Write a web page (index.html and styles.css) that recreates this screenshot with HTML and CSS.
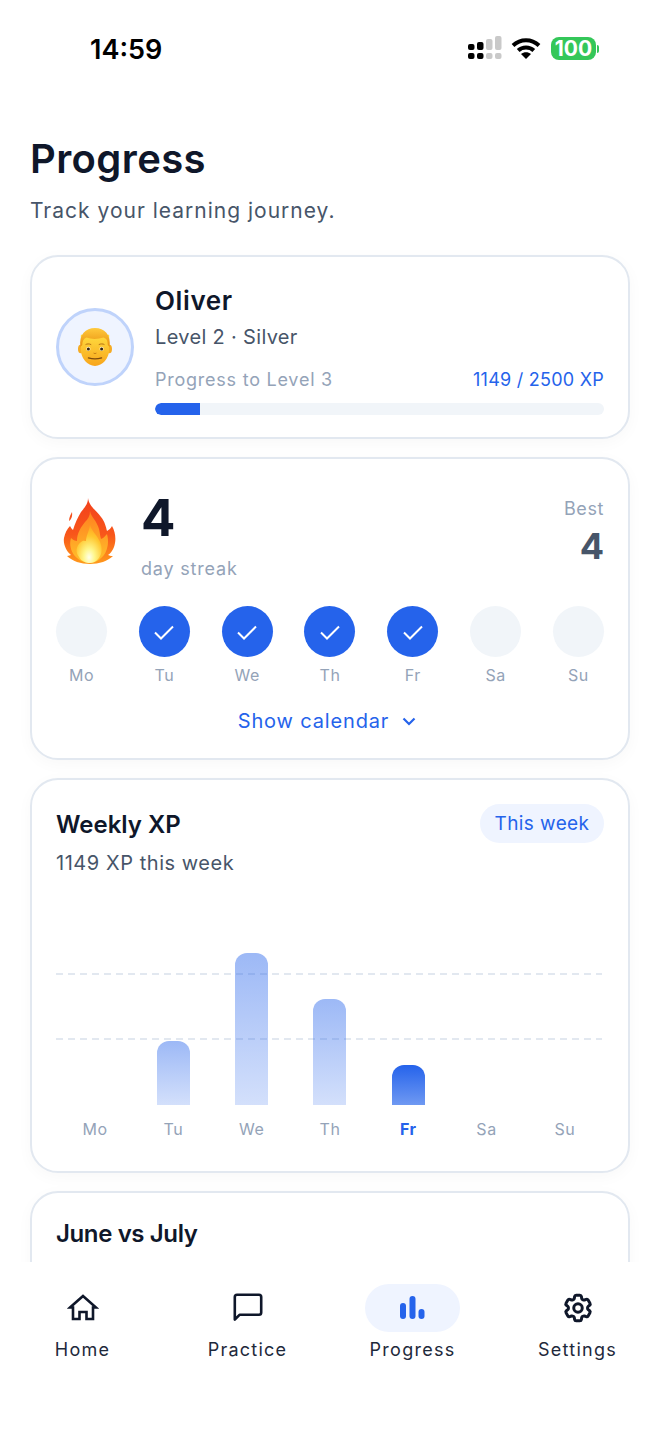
FILE: index.html
```html
<!DOCTYPE html>
<html lang="en">
<head>
<meta charset="utf-8">
<title>Progress</title>
<link rel="stylesheet" href="styles.css">
</head>
<body>
<div class="app">
  <div class="content">
    <div class="status">
      <span class="time">14:59</span>
      <div class="status-icons">
        <svg class="signal" width="35" height="24" viewBox="0 0 35 24">
          <rect x="0" y="8" width="6.500" height="6" rx="2" fill="#000"/><rect x="0" y="17" width="6.500" height="6" rx="2" fill="#000"/>
          <rect x="9" y="6" width="6.500" height="8" rx="2" fill="#000"/><rect x="9" y="17" width="6.500" height="6" rx="2" fill="#000"/>
          <rect x="18" y="3" width="6.500" height="11" rx="2" fill="#c9c9c9"/><rect x="18" y="17" width="6.500" height="6" rx="2" fill="#c9c9c9"/>
          <rect x="27" y="0" width="6.500" height="14" rx="2" fill="#c9c9c9"/><rect x="27" y="17" width="6.500" height="6" rx="2" fill="#c9c9c9"/>
        </svg>
        <svg class="wifi" width="30" height="22" viewBox="0 0 30 22">
          <path d="M2 8.500C9.500 1.500 20.500 1.500 28 8.500" fill="none" stroke="#000" stroke-width="4"/>
          <path d="M7.200 13.500C11.500 9.500 18.500 9.500 22.800 13.500" fill="none" stroke="#000" stroke-width="4"/>
          <path d="M10 17 L15 22 L20 17 C17 14.500 13 14.500 10 17Z" fill="#000"/>
        </svg>
        <div class="battery"><span class="battery-body">100</span><span class="battery-cap"></span></div>
      </div>
    </div>

    <main class="main">
      <h1 class="title">Progress</h1>
      <p class="subtitle">Track your learning journey.</p>

      <section class="card profile">
        <div class="avatar">
          <svg width="34" height="40" viewBox="0 0 36 42">
            <defs>
              <linearGradient id="skin" x1="0" y1="0" x2="0" y2="1"><stop offset="0" stop-color="#ffdc3f"/><stop offset="1" stop-color="#f8a51c"/></linearGradient>
              <linearGradient id="hair" x1="0" y1="0" x2="0" y2="1"><stop offset="0" stop-color="#ffc93c"/><stop offset="1" stop-color="#e8900f"/></linearGradient>
            </defs>
            <ellipse cx="2.800" cy="23" rx="2.800" ry="4.500" fill="#f5ab22"/>
            <ellipse cx="33.200" cy="23" rx="2.800" ry="4.500" fill="#f5ab22"/>
            <path d="M3 8V24C3 33 10 41 18 41C26 41 33 33 33 24V8Z" fill="url(#skin)"/>
            <path d="M2.500 21C1 8 8 1 18 1C28 1 35 8 33.500 21L31.500 19C31.500 14 30 12 27 11C21 13 14 13 9 11C6 12 4.500 15 4.500 19Z" fill="url(#hair)"/>
            <path d="M8 18.500C9.500 17.500 12 17.500 14 18.500M22 18.500C24 17.500 26.500 17.500 28 18.500" fill="none" stroke="#b06a10" stroke-width="1"/>
            <circle cx="11" cy="23" r="2.200" fill="#fff3c9"/><circle cx="25" cy="23" r="2.200" fill="#fff3c9"/>
            <circle cx="11" cy="23" r="1.600" fill="#33220f"/><circle cx="25" cy="23" r="1.600" fill="#33220f"/>
            <path d="M16.500 27.500Q18 28.500 19.500 27.500" fill="none" stroke="#c47c14" stroke-width="1"/>
            <path d="M11 32.500Q18 34.500 25 32.500" fill="none" stroke="#7c4a0e" stroke-width="1.300" stroke-linecap="round"/>
          </svg>
        </div>
        <div class="profile-info">
          <div class="name">Oliver</div>
          <div class="level">Level 2 · Silver</div>
          <div class="xp-row"><span class="xp-label">Progress to Level 3</span><span class="xp-value">1149 / 2500 XP</span></div>
          <div class="track"><div class="fill"></div></div>
        </div>
      </section>

      <section class="card streak">
        <div class="streak-top">
          <svg class="flame" width="54" height="68" viewBox="0 0 54 68">
            <defs>
              <linearGradient id="fl1" x1="0" y1="0" x2="0" y2="1"><stop offset="0" stop-color="#f2401c"/><stop offset=".55" stop-color="#f8561a"/><stop offset="1" stop-color="#ff9a1c"/></linearGradient>
              <linearGradient id="fl2" x1="0" y1="0" x2="0" y2="1"><stop offset="0" stop-color="#ff7f1f"/><stop offset="1" stop-color="#ffc12b"/></linearGradient>
              <radialGradient id="fl3" cx=".5" cy=".85" r=".8"><stop offset="0" stop-color="#ffffea"/><stop offset=".28" stop-color="#fff68a"/><stop offset=".7" stop-color="#ffc62e"/><stop offset="1" stop-color="#ffa820"/></radialGradient>
            </defs>
            <path d="M25 1C26 9 32 12 38 20C42 25 43 30 44 34C46 33 48 31 49 29C52 34 53 41 52 46C51 52 48 56 45 58C47 59 49 59 50 59C45 64 36 67 27 67C18 67 9 64 4 59C6 59 7 58 8 58C3 54 0 47 1 41C2 36 4 32 7 29C8 31 9 32 10 33C12 26 15 20 18 15C22 10 25 7 25 1Z" fill="url(#fl1)"/>
            <path d="M6 24C6 20 8 17 9 15C9.500 18 9 22 6 24Z" fill="#f4511e"/>
            <path d="M27 14C28 20 34 24 36 32C37 36 37 39 38 42C41 41 43 38 44 37C46 44 45 52 41 58C37 63 32 66 27 66C21 66 15 63 11 58C8 54 6 47 8 41C10 43 12 44 14 44C14 36 18 30 22 25C25 22 27 19 27 14Z" fill="url(#fl2)"/>
            <path d="M27 28C28 33 33 37 36 43C40 50 39 57 36 61C33 65 30 66 27 66C23 66 18 64 16 60C12 55 13 49 18 45C20 43 22 44 23 44C23 39 26 35 27 28Z" fill="url(#fl3)"/>
          </svg>
          <div class="streak-main">
            <div class="streak-num">4</div>
            <div class="streak-label">day streak</div>
          </div>
          <div class="best">
            <div class="best-label">Best</div>
            <div class="best-num">4</div>
          </div>
        </div>
        <div class="days">
          <div class="day"><div class="dot"></div><span class="day-label">Mo</span></div>
          <div class="day"><div class="dot done"><svg width="24" height="24" viewBox="0 0 24 24"><path d="M3 12.500L9 18.500L21 6.500" fill="none" stroke="#fff" stroke-width="2"/></svg></div><span class="day-label">Tu</span></div>
          <div class="day"><div class="dot done"><svg width="24" height="24" viewBox="0 0 24 24"><path d="M3 12.500L9 18.500L21 6.500" fill="none" stroke="#fff" stroke-width="2"/></svg></div><span class="day-label">We</span></div>
          <div class="day"><div class="dot done"><svg width="24" height="24" viewBox="0 0 24 24"><path d="M3 12.500L9 18.500L21 6.500" fill="none" stroke="#fff" stroke-width="2"/></svg></div><span class="day-label">Th</span></div>
          <div class="day"><div class="dot done"><svg width="24" height="24" viewBox="0 0 24 24"><path d="M3 12.500L9 18.500L21 6.500" fill="none" stroke="#fff" stroke-width="2"/></svg></div><span class="day-label">Fr</span></div>
          <div class="day"><div class="dot"></div><span class="day-label">Sa</span></div>
          <div class="day"><div class="dot"></div><span class="day-label">Su</span></div>
        </div>
        <div class="show-cal">
          <span>Show calendar</span>
          <svg width="14" height="9" viewBox="0 0 14 9"><path d="M1.500 1.500L7 7L12.500 1.500" fill="none" stroke="#2563eb" stroke-width="2.200"/></svg>
        </div>
      </section>

      <section class="card weekly">
        <div class="weekly-head">
          <h2 class="card-title">Weekly XP</h2>
          <span class="pill">This week</span>
        </div>
        <div class="weekly-sub">1149 XP this week</div>
        <div class="plot">
          <div class="gridline gridline-top"></div>
          <div class="gridline gridline-bottom"></div>
          <div class="col"></div>
          <div class="col"><div class="bar bar-tu"></div></div>
          <div class="col"><div class="bar bar-we"></div></div>
          <div class="col"><div class="bar bar-th"></div></div>
          <div class="col"><div class="bar bar-fr"></div></div>
          <div class="col"></div>
          <div class="col"></div>
        </div>
        <div class="axis">
          <span>Mo</span><span>Tu</span><span>We</span><span>Th</span><span class="axis-on">Fr</span><span>Sa</span><span>Su</span>
        </div>
      </section>

      <section class="card partial">
        <h2 class="card-title card-title-tight">June vs July</h2>
      </section>
    </main>
  </div>

  <nav class="nav">
    <div class="nav-item">
      <div class="nav-icon">
        <svg width="32" height="32" viewBox="0 0 32 32"><path d="M3 15.500L16 4L29 15.500H26V27H19.500V20H12.500V27H6V15.500Z" fill="none" stroke="#0f172a" stroke-width="2.600" stroke-linejoin="miter"/></svg>
      </div>
      <span class="nav-label">Home</span>
    </div>
    <div class="nav-item">
      <div class="nav-icon">
        <svg width="32" height="32" viewBox="0 0 32 32"><path d="M2.800 27.500V5Q2.800 2.800 5 2.800H27Q29.200 2.800 29.200 5V20.500Q29.200 22.800 27 22.800H7.500Z" fill="none" stroke="#0f172a" stroke-width="2.600" stroke-linejoin="round"/></svg>
      </div>
      <span class="nav-label">Practice</span>
    </div>
    <div class="nav-item">
      <div class="nav-icon nav-icon-on">
        <svg width="32" height="32" viewBox="0 0 32 32"><rect x="3" y="11" width="6" height="16" rx="3" fill="#2563eb"/><rect x="12.500" y="4" width="6" height="23" rx="3" fill="#2563eb"/><rect x="21.500" y="17" width="6" height="10" rx="3" fill="#2563eb"/></svg>
      </div>
      <span class="nav-label">Progress</span>
    </div>
    <div class="nav-item">
      <div class="nav-icon">
        <svg width="34" height="34" viewBox="0 0 24 24" fill="none" stroke="#0f172a" stroke-width="2.100"><path d="M9.594 3.940c.09-.542.56-.94 1.110-.94h2.593c.55 0 1.020.398 1.110.94l.213 1.281c.063.374.313.686.645.870.074.040.147.083.22.127.325.196.72.257 1.075.124l1.217-.456a1.125 1.125 0 0 1 1.370.490l1.296 2.247a1.125 1.125 0 0 1-.26 1.431l-1.003.827c-.293.241-.438.613-.43.992a7.723 7.723 0 0 1 0 .255c-.008.378.137.75.43.991l1.004.827c.424.35.534.955.26 1.430l-1.298 2.247a1.125 1.125 0 0 1-1.369.491l-1.217-.456c-.355-.133-.75-.072-1.076.124a6.470 6.470 0 0 1-.22.128c-.331.183-.581.495-.644.869l-.213 1.281c-.09.543-.56.94-1.110.94h-2.594c-.55 0-1.019-.398-1.110-.94l-.213-1.281c-.062-.374-.312-.686-.644-.87a6.520 6.520 0 0 1-.22-.127c-.325-.196-.72-.257-1.076-.124l-1.217.456a1.125 1.125 0 0 1-1.369-.49l-1.297-2.247a1.125 1.125 0 0 1 .26-1.431l1.004-.827c.292-.24.437-.613.43-.991a6.932 6.932 0 0 1 0-.255c.007-.38-.138-.751-.43-.992l-1.004-.827a1.125 1.125 0 0 1-.26-1.430l1.297-2.247a1.125 1.125 0 0 1 1.370-.491l1.216.456c.356.133.751.072 1.076-.124.072-.044.146-.086.22-.128.332-.183.582-.495.644-.869l.214-1.280Z"/><circle cx="12" cy="12" r="3"/></svg>
      </div>
      <span class="nav-label">Settings</span>
    </div>
  </nav>
</div>
</body>
</html>
```
FILE: styles.css
```css
* { box-sizing: border-box; }
html, body { margin: 0; padding: 0; background: #fff; }
body { font-family: Inter, "Liberation Sans", sans-serif; color: #0f172a; }
h1, h2, p { margin: 0; }

.app { width: 660px; height: 1434px; display: flex; flex-direction: column; overflow: hidden; background: #fff; }
.content { flex: 1; min-height: 0; overflow: hidden; }

.status { height: 98px; padding: 0 61px 0 90px; display: flex; justify-content: space-between; align-items: flex-start; }
.time { margin-top: 33px; font-size: 27px; line-height: 34px; font-weight: 600; color: #000; }
.status-icons { margin-top: 37px; display: flex; align-items: center; gap: 10px; }
.wifi { margin-top: -2px; }
.signal { margin: -1px -2px 0 0; }
.battery { display: flex; align-items: center; gap: 1px; }
.battery-body { width: 45px; height: 23px; border-radius: 8px; background: #34c759; color: #fff; font-size: 21px; font-weight: 700; line-height: 23px; text-align: center; }
.battery-cap { width: 2px; height: 8px; border-radius: 0 2px 2px 0; background: #34c759; }

.main { padding: 0 30px; }
.title { font-size: 40px; line-height: 48px; font-weight: 600; color: #0f172a; letter-spacing: 0.4px; margin-top: 37px; }
.subtitle { font-size: 21px; line-height: 28px; color: #475569; letter-spacing: 1px; margin-top: 14px; }

.card { background: #fff; border: 2px solid #e2e8f0; border-radius: 28px; padding: 22px 24px; box-shadow: 0 4px 16px rgba(15, 23, 42, 0.03); margin-top: 18px; }

.profile { margin-top: 30px; height: 184px; display: flex; align-items: center; gap: 21px; }
.avatar { width: 78px; height: 78px; border-radius: 50%; border: 3px solid #bfd3fb; background: #eff4ff; display: flex; align-items: center; justify-content: center; flex: none; }
.profile-info { flex: 1; padding-top: 6px; }
.name { font-size: 26px; line-height: 32px; font-weight: 600; letter-spacing: 0.6px; }
.level { font-size: 20px; line-height: 28px; color: #475569; letter-spacing: 0.33px; margin-top: 6px; }
.xp-row { display: flex; justify-content: space-between; font-size: 18px; line-height: 24px; margin-top: 17px; }
.xp-label { color: #94a3b8; letter-spacing: 0.76px; }
.xp-value { color: #2563eb; letter-spacing: 0.25px; }
.track { height: 12px; border-radius: 6px; background: #f1f5f9; margin-top: 11px; overflow: hidden; }
.fill { width: 10%; height: 100%; background: #2563eb; border-radius: 6px 0 0 6px; }

.streak { height: 303px; padding-top: 0; }
.streak-top { display: flex; height: 147px; }
.flame { margin: 38px 0 0 7px; flex: none; }
.streak-main { margin-left: 24px; flex: 1; }
.streak-num { font-size: 51px; line-height: 60px; font-weight: 700; margin-top: 29px; }
.streak-label { font-size: 18px; line-height: 24px; color: #94a3b8; letter-spacing: 0.8px; margin-top: 9px; }
.best { text-align: right; }
.best-label { font-size: 18px; line-height: 24px; color: #94a3b8; letter-spacing: 0.6px; margin-top: 38px; }
.best-num { font-size: 36px; line-height: 44px; font-weight: 700; color: #475569; margin-top: 3px; }

.days { display: flex; justify-content: space-between; }
.day { width: 51px; display: flex; flex-direction: column; align-items: center; }
.dot { width: 51px; height: 51px; border-radius: 50%; background: #f1f5f9; display: flex; align-items: center; justify-content: center; }
.dot.done { background: #2563eb; }
.day-label { font-size: 16px; line-height: 22px; color: #94a3b8; letter-spacing: 0.6px; margin-top: 7px; }
.show-cal { display: flex; justify-content: center; align-items: center; gap: 13px; color: #2563eb; font-size: 20px; line-height: 26px; letter-spacing: 0.85px; margin-top: 22px; padding-right: 6px; }

.weekly { height: 395px; padding-top: 24px; }
.weekly-head { display: flex; justify-content: space-between; align-items: center; height: 39px; }
.card-title { font-size: 24px; line-height: 30px; font-weight: 600; margin-top: 2px; }
.card-title-tight { letter-spacing: -0.38px; margin-top: 0; }
.pill { height: 39px; width: 124px; border-radius: 20px; background: #eff4ff; color: #2563eb; font-size: 19px; line-height: 39px; text-align: center; letter-spacing: 0.4px; }
.weekly-sub { font-size: 20px; line-height: 28px; color: #475569; letter-spacing: 0.55px; margin-top: 6px; }

.plot { position: relative; height: 200px; margin-top: 28px; display: grid; grid-template-columns: repeat(7, 1fr); align-items: end; }
.gridline { position: absolute; left: 0; right: 2px; height: 2px; background: repeating-linear-gradient(90deg, #e2e8f0 0 7px, transparent 7px 12px); }
.gridline-top { top: 68px; }
.gridline-bottom { top: 133px; }
.col { display: flex; justify-content: center; align-items: flex-end; height: 100%; position: relative; }
.bar { width: 33px; border-radius: 12px 12px 0 0; background: linear-gradient(180deg, rgba(37, 99, 235, 0.45), rgba(37, 99, 235, 0.2)); }
.bar-tu { height: 64px; }
.bar-we { height: 152px; }
.bar-th { height: 106px; }
.bar-fr { height: 40px; background: linear-gradient(180deg, #2563eb, #6f99f2); }
.axis { display: grid; grid-template-columns: repeat(7, 1fr); text-align: center; font-size: 16px; line-height: 22px; color: #94a3b8; letter-spacing: 0.6px; margin-top: 13px; }
.axis-on { color: #2563eb; font-weight: 700; }

.partial { height: 200px; padding-top: 26px; }

.nav { height: 172px; flex: none; background: #fff; display: grid; grid-template-columns: repeat(4, 1fr); padding-top: 22px; align-items: start; }
.nav-item { display: flex; flex-direction: column; align-items: center; }
.nav-icon { width: 95px; height: 48px; border-radius: 24px; display: flex; align-items: center; justify-content: center; }
.nav-icon-on { background: #eff4ff; }
.nav-label { font-size: 18px; line-height: 24px; color: #1e293b; letter-spacing: 1.25px; margin-top: 6px; }
```
